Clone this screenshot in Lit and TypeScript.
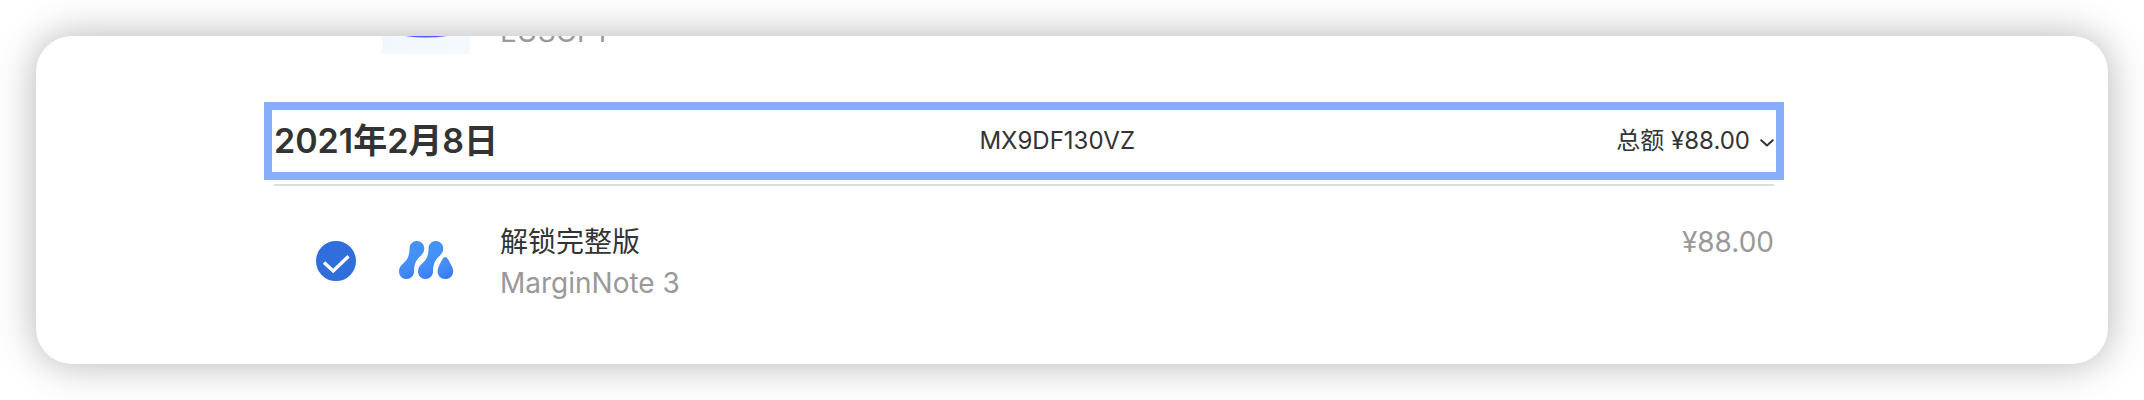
import { LitElement, html, css, svg, nothing } from "lit";
import { customElement, property, state } from "lit/decorators.js";

@customElement("purchase-row")
export class PurchaseRow extends LitElement {
  @property() name = "";
  @property() seller = "";
  @property() price = "";
  @property() artwork = "";
  @property({ type: Boolean }) selectable = false;

  static styles = css`
    :host {
      display: block;
    }
    .row {
      display: grid;
      grid-template-columns: 40px 88px 1fr auto;
      height: 88px;
      padding-left: 42px;
    }
    .tick {
      display: grid;
      align-items: center;
      width: 40px;
    }
    .tick > * {
      grid-area: 1 / 1;
    }
    .box {
      appearance: none;
      width: 40px;
      height: 40px;
      margin: 0;
      border: 2px solid #c8c8c8;
      border-radius: 50%;
      cursor: pointer;
    }
    .box:checked {
      border-color: #2f6edb;
      background: #2f6edb;
    }
    .mark {
      width: 40px;
      height: 40px;
      pointer-events: none;
    }
    .art {
      width: 88px;
      height: 88px;
      margin-left: 26px;
    }
    .text {
      display: flex;
      flex-direction: column;
      justify-content: flex-end;
      padding: 5px 0 1px 56px;
      line-height: 41px;
    }
    .seller,
    .price {
      color: #999;
    }
    .price {
      padding-top: 5px;
      line-height: 41px;
    }
  `;

  private renderArt() {
    if (this.artwork === "orb") {
      return html`<svg class="art" viewBox="0 0 88 88" aria-hidden="true">
        <defs>
          <linearGradient id="pale" x1="0" y1="0" x2="1" y2="1">
            <stop offset="0" stop-color="#eff6ff" />
            <stop offset="1" stop-color="#f5f9fd" />
          </linearGradient>
        </defs>
        <rect width="88" height="88" fill="url(#pale)" />
        <path
          d="M8 20H80V50Q80 66 71 69Q57 71.6 44 71.6Q31 71.6 17 69Q8 66 8 50Z"
          fill="#4c5dfa"
        />
      </svg>`;
    }
    return html`<svg class="art" viewBox="0 1 88 88" role="img" aria-label="MarginNote">
      <defs>
        <linearGradient id="blue" gradientUnits="userSpaceOnUse" x1="22" y1="45" x2="31" y2="63">
          <stop offset="0" stop-color="#4491f7" />
          <stop offset="0.5" stop-color="#438af8" />
          <stop offset="1" stop-color="#3575f8" />
        </linearGradient>
        <linearGradient id="drop" gradientUnits="userSpaceOnUse" x1="58" y1="44" x2="68" y2="63">
          <stop offset="0" stop-color="#4491f7" />
          <stop offset="0.5" stop-color="#438af8" />
          <stop offset="1" stop-color="#3575f8" />
        </linearGradient>
        <path
          id="bone"
          d="M34.8 25C30.6 25 27.6 28.3 27.6 32.3C27.6 35.6 27 40.2 24.7 43.8C22.8 46.8 17 49.3 17 55.5C17 59.7 20.2 63 24.4 63C28.7 63 32 59.7 32 55.5C32 50.8 33 46.2 35.4 43.2C37.8 40.2 42.3 37.5 42.3 32.4C42.3 28.3 39 25 34.8 25Z"
        />
      </defs>
      ${svg`<use href="#bone" fill="url(#blue)" />
      <use href="#bone" x="19" fill="url(#blue)" />`}
      <path
        fill="url(#drop)"
        d="M63.2 41C61.3 41 60.4 43.2 58.8 46.3C57.4 49 55.6 51.6 55.6 55.5C55.6 59.9 59 63 63.3 63C67.7 63 71.2 59.7 71.2 55.4C71.2 51.7 69.2 49 67.7 46.2C66 43.1 65.1 41 63.2 41Z"
      />
    </svg>`;
  }

  render() {
    return html`<div class="row">
      <label class="tick">
        ${this.selectable
          ? html`<input class="box" type="checkbox" checked aria-label=${this.name} />
              <svg class="mark" viewBox="0 0 40 40" aria-hidden="true">
                <path
                  d="M8 21.5L17.2 30L32.5 15.3"
                  fill="none"
                  stroke="#fff"
                  stroke-width="3.4"
                />
              </svg>`
          : nothing}
      </label>
      ${this.renderArt()}
      <div class="text">
        ${this.name ? html`<span>${this.name}</span>` : nothing}
        <span class="seller">${this.seller}</span>
      </div>
      <span class="price">${this.price}</span>
    </div>`;
  }
}

@customElement("app-root")
export class AppRoot extends LitElement {
  @state() private open = true;

  static styles = css`
    :host {
      display: block;
      padding: 36px;
      background: #fff;
      color: #333;
      font-family: Inter, "Noto Sans CJK SC", sans-serif;
      font-size: 28px;
    }
    .card {
      overflow: hidden;
      padding: 0 334px 59px 238px;
      border-radius: 36px;
      background: #fff;
      box-shadow: 0 0 40px rgba(0, 0, 0, 0.3);
    }
    .previous {
      margin-top: -70px;
    }
    .summary {
      display: flex;
      align-items: center;
      justify-content: space-between;
      height: 62px;
      margin: 48px -10px 4px;
      padding: 0 2px;
      border: 8px solid #87aff9;
      font-size: 24px;
      line-height: 40px;
    }
    .date {
      margin: 0;
      font-size: 34px;
      font-weight: 600;
    }
    .order {
      color: inherit;
      text-decoration: none;
    }
    .total {
      display: flex;
      align-items: center;
      gap: 10px;
      padding: 0;
      border: 0;
      background: none;
      color: inherit;
      font: inherit;
      cursor: pointer;
    }
    .chevron {
      width: 14px;
      height: 8px;
      margin-top: 4px;
    }
    .items {
      padding-top: 31px;
      border-top: 2px solid #ddd;
    }
  `;

  render() {
    return html`<main class="card">
      <purchase-row class="previous" seller="EUSOFT" artwork="orb"></purchase-row>
      <header class="summary">
        <h2 class="date">2021年2月8日</h2>
        <a class="order" href="#order">MX9DF130VZ</a>
        <button
          class="total"
          aria-expanded=${this.open ? "true" : "false"}
          @click=${() => (this.open = !this.open)}
        >
          <span>总额 ¥88.00</span>
          <svg class="chevron" viewBox="0 0 14 8" aria-hidden="true">
            <path
              d="M1.2 1.2L7 6.4L12.8 1.2"
              fill="none"
              stroke="#333"
              stroke-width="2"
              stroke-linecap="round"
              stroke-linejoin="round"
            />
          </svg>
        </button>
      </header>
      <section class="items">
        ${this.open
          ? html`<purchase-row
              name="解锁完整版"
              seller="MarginNote 3"
              price="¥88.00"
              artwork="note"
              selectable
            ></purchase-row>`
          : nothing}
      </section>
    </main>`;
  }
}
